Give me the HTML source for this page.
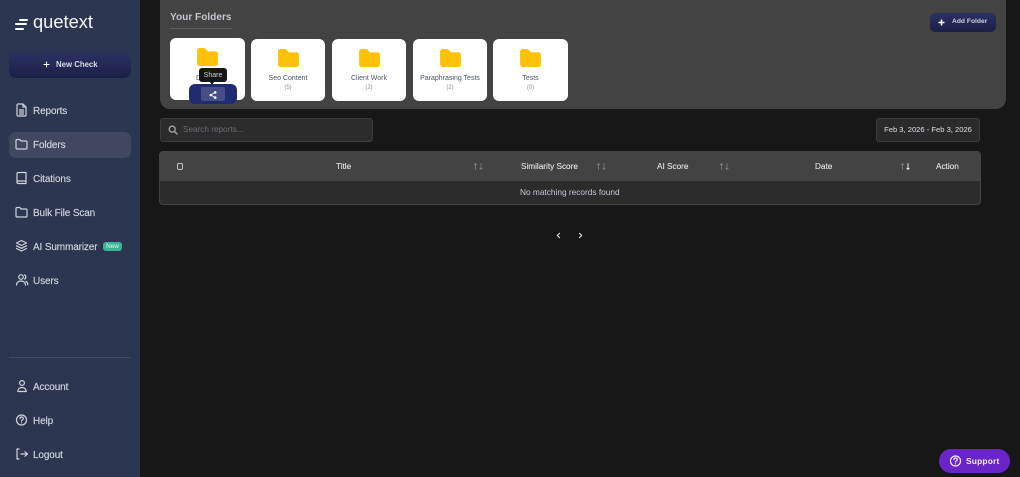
<!DOCTYPE html>
<html lang="en">
<head>
<meta charset="utf-8">
<title>Quetext Folders</title>
<style>
*{box-sizing:border-box;margin:0;padding:0}
html,body{width:1020px;height:477px;overflow:hidden;background:#171717;font-family:"Liberation Sans",sans-serif}
.a{position:absolute}
.t{position:absolute;white-space:nowrap;line-height:1}
#side{position:absolute;left:0;top:0;width:140px;height:477px;background:#2c3650}
.nav{position:absolute;left:33px;font-size:10px;letter-spacing:-.13px;color:#cfd3dc;white-space:nowrap;line-height:14px;-webkit-text-stroke:.15px #cfd3dc;margin-top:1px}
svg.ic{position:absolute;fill:none;stroke:#cfd3dc;stroke-width:1.2;stroke-linecap:round;stroke-linejoin:round;margin-top:-1px}
.card{position:absolute;top:39px;width:74px;height:62px;background:#fff;border-radius:6px}
.card svg{position:absolute;left:27px;top:10px}
.card .n{position:absolute;left:0;width:100%;top:35px;text-align:center;font-size:7px;color:#4d5568;line-height:9px;white-space:nowrap}
.card .c{position:absolute;left:0;width:100%;top:45px;text-align:center;font-size:6px;color:#8b909c;line-height:8px}
.th{position:absolute;top:161px;font-size:8.200px;color:#e4e4e6;line-height:11px;white-space:nowrap;-webkit-text-stroke:.1px #e4e4e6}
svg.sort{position:absolute;top:163px;fill:none;stroke-width:.9;stroke-linecap:round;stroke-linejoin:round}
</style>
</head>
<body>
<div id="side">
  <div class="a" style="left:19px;top:18.500px;width:9px;height:2px;background:#fff;border-radius:1px"></div>
  <div class="a" style="left:15px;top:23px;width:12px;height:2px;background:#fff;border-radius:1px"></div>
  <div class="a" style="left:15px;top:27.500px;width:9px;height:2px;background:#fff;border-radius:1px"></div>
  <div class="t" style="left:33px;top:13px;font-size:18.300px;color:#f4f5f7">quetext</div>

  <div class="a" style="left:9px;top:53px;width:122px;height:25px;border-radius:7px;background:linear-gradient(#2b3163,#1b2045)"></div>
  <svg class="a" style="left:43px;top:61px" width="7" height="7" viewBox="0 0 7 7" stroke="#fff" stroke-width="1.100"><path d="M3.500 .5v6M.5 3.500h6"/></svg>
  <div class="t" style="left:56px;top:61px;font-size:7.800px;font-weight:bold;color:#d9dbe4">New Check</div>

  <svg class="ic" style="left:15px;top:104px" width="13" height="14" viewBox="0 0 13 14"><path d="M3 1h5l3 3v8a1 1 0 0 1-1 1H3a1 1 0 0 1-1-1V2a1 1 0 0 1 1-1zM8 1v3h3M4.500 7h4M4.500 9h4M4.500 11h4"/></svg>
  <div class="nav" style="top:104px">Reports</div>

  <div class="a" style="left:9px;top:132px;width:122px;height:26px;border-radius:7px;background:#3f4860"></div>
  <svg class="ic" style="left:15px;top:138px" width="13" height="14" viewBox="0 0 13 14"><path d="M1 3.500a1 1 0 0 1 1-1h2.800l1.200 1.500h5a1 1 0 0 1 1 1v6a1 1 0 0 1-1 1H2a1 1 0 0 1-1-1z"/></svg>
  <div class="nav" style="top:138px">Folders</div>

  <svg class="ic" style="left:15px;top:172px" width="13" height="14" viewBox="0 0 13 14"><path d="M2 11.500V2.500a1 1 0 0 1 1-1h8v11H3.200A1.200 1.200 0 0 1 2 11.300a1.200 1.200 0 0 1 1.200-1.300H11"/></svg>
  <div class="nav" style="top:172px">Citations</div>

  <svg class="ic" style="left:15px;top:206px" width="13" height="14" viewBox="0 0 13 14"><path d="M1 3.500a1 1 0 0 1 1-1h2.800l1.200 1.500h5a1 1 0 0 1 1 1v6a1 1 0 0 1-1 1H2a1 1 0 0 1-1-1z"/></svg>
  <div class="nav" style="top:206px">Bulk File Scan</div>

  <svg class="ic" style="left:15px;top:240px" width="13" height="14" viewBox="0 0 13 14"><path d="M6.500 1.500l5 2.500-5 2.500-5-2.500zM1.500 6.800l5 2.500 5-2.500M1.500 9.500l5 2.500 5-2.500"/></svg>
  <div class="nav" style="top:240px">AI Summarizer</div>
  <div class="a" style="left:103px;top:242px;width:19px;height:9px;border-radius:3px;background:#39b296;color:#e6f6f1;font-size:6.400px;line-height:9px;text-align:center">New</div>

  <svg class="ic" style="left:15px;top:274px" width="14" height="14" viewBox="0 0 14 14"><circle cx="6" cy="4" r="2.300"/><path d="M1.500 12c0-2.500 2-4 4.500-4s4.500 1.500 4.500 4M9.500 1.900a2.300 2.300 0 0 1 0 4.200M11 8.300c1 .6 1.800 1.900 1.800 3.400"/></svg>
  <div class="nav" style="top:274px">Users</div>

  <div class="a" style="left:9px;top:357px;width:122px;height:1px;background:#414a62"></div>

  <svg class="ic" style="left:15px;top:380px" width="14" height="14" viewBox="0 0 14 14"><circle cx="7" cy="4" r="2.400"/><path d="M2.800 12.500c0-2.500 1.800-4 4.200-4s4.200 1.500 4.200 4z"/></svg>
  <div class="nav" style="top:380px">Account</div>

  <svg class="ic" style="left:15px;top:414px" width="14" height="14" viewBox="0 0 14 14"><circle cx="6.500" cy="7" r="5"/><path d="M5 5.600a1.600 1.600 0 1 1 2.300 1.400c-.6.300-.8.600-.8 1.100M6.500 9.800v.1"/></svg>
  <div class="nav" style="top:414px">Help</div>

  <svg class="ic" style="left:15px;top:448px" width="14" height="14" viewBox="0 0 14 14"><path d="M4 2H2v10h2M6 7h6.500M10 4.800L12.500 7 10 9.200"/></svg>
  <div class="nav" style="top:448px">Logout</div>
</div>

<!-- Folders panel -->
<div class="a" style="left:160px;top:-12px;width:846px;height:121px;background:#434343;border-radius:10px"></div>
<div class="t" style="left:170px;top:13px;font-size:10.100px;font-weight:bold;color:#c2c5cc">Your Folders</div>
<div class="a" style="left:170px;top:28px;width:62px;height:1px;background:#5c5c5c"></div>

<div class="a" style="left:930px;top:13px;width:66px;height:19px;border-radius:5px;background:linear-gradient(#2b3163,#1b2045)"></div>
<svg class="a" style="left:938px;top:19px" width="7" height="7" viewBox="0 0 7 7" stroke="#fff" stroke-width="1.500"><path d="M3.500 .5v6M.5 3.500h6"/></svg>
<div class="t" style="left:952px;top:19px;font-size:6.700px;font-weight:bold;color:#cdd0dc">Add Folder</div>

<div class="card" style="left:170px;top:38px;width:75px"><svg style="top:10px" width="21" height="18" viewBox="0 0 22 19"><path d="M2.500 0h4.500c1 0 1.600.4 2.200 1l2.300 2.500h8a2.500 2.500 0 0 1 2.500 2.500v10.500a2.500 2.500 0 0 1-2.500 2.500h-17a2.500 2.500 0 0 1-2.500-2.500v-14a2.500 2.500 0 0 1 2.500-2.500z" fill="#ffc107"/></svg><div class="n" style="top:36px;left:26px;width:auto">D</div></div>
<div class="card" style="left:251px"><svg width="21" height="18" viewBox="0 0 22 19"><path d="M2.500 0h4.500c1 0 1.600.4 2.200 1l2.300 2.500h8a2.500 2.500 0 0 1 2.500 2.500v10.500a2.500 2.500 0 0 1-2.500 2.500h-17a2.500 2.500 0 0 1-2.500-2.500v-14a2.500 2.500 0 0 1 2.500-2.500z" fill="#ffc107"/></svg><div class="n">Seo Content</div><div class="c">(5)</div></div>
<div class="card" style="left:332px"><svg width="21" height="18" viewBox="0 0 22 19"><path d="M2.500 0h4.500c1 0 1.600.4 2.200 1l2.300 2.500h8a2.500 2.500 0 0 1 2.500 2.500v10.500a2.500 2.500 0 0 1-2.500 2.500h-17a2.500 2.500 0 0 1-2.500-2.500v-14a2.500 2.500 0 0 1 2.500-2.500z" fill="#ffc107"/></svg><div class="n">Client Work</div><div class="c">(2)</div></div>
<div class="card" style="left:413px"><svg width="21" height="18" viewBox="0 0 22 19"><path d="M2.500 0h4.500c1 0 1.600.4 2.200 1l2.300 2.500h8a2.500 2.500 0 0 1 2.500 2.500v10.500a2.500 2.500 0 0 1-2.500 2.500h-17a2.500 2.500 0 0 1-2.500-2.500v-14a2.500 2.500 0 0 1 2.500-2.500z" fill="#ffc107"/></svg><div class="n">Paraphrasing Tests</div><div class="c">(2)</div></div>
<div class="card" style="left:493px;width:75px"><svg width="21" height="18" viewBox="0 0 22 19"><path d="M2.500 0h4.500c1 0 1.600.4 2.200 1l2.300 2.500h8a2.500 2.500 0 0 1 2.500 2.500v10.500a2.500 2.500 0 0 1-2.500 2.500h-17a2.500 2.500 0 0 1-2.500-2.500v-14a2.500 2.500 0 0 1 2.500-2.500z" fill="#ffc107"/></svg><div class="n">Tests</div><div class="c">(0)</div></div>

<!-- share overlay -->
<div class="a" style="left:189px;top:84px;width:48px;height:20px;border-radius:6px;background:#212c70"></div>
<div class="a" style="left:201px;top:87px;width:24px;height:14px;border-radius:2px;background:#454e86"></div>
<svg class="a" style="left:209px;top:90.500px" width="8" height="8" viewBox="0 0 8 8"><path d="M6 1.300L2 4l4 2.700" stroke="#fff" stroke-width=".8" fill="none"/><circle cx="6.200" cy="1.400" r="1.300" fill="#fff"/><circle cx="1.800" cy="4" r="1.300" fill="#fff"/><circle cx="6.200" cy="6.600" r="1.300" fill="#fff"/></svg>
<div class="a" style="left:199px;top:68px;width:28px;height:14px;border-radius:3px;background:#161616;color:#cfcfcf;font-size:7px;line-height:15px;text-align:center">Share</div>
<div class="a" style="left:210px;top:82px;width:0;height:0;border-left:2.500px solid transparent;border-right:2.500px solid transparent;border-top:3px solid #161616"></div>

<!-- search -->
<div class="a" style="left:160px;top:118px;width:213px;height:24px;background:#2c2c2c;border:1px solid #3c3c3c;border-radius:3px"></div>
<svg class="a" style="left:168px;top:125px" width="10" height="10" viewBox="0 0 10 10" fill="none" stroke="#a6a6a8" stroke-width="1.300" stroke-linecap="round"><circle cx="4.200" cy="4.200" r="3"/><path d="M6.500 6.500L9 9"/></svg>
<div class="t" style="left:183px;top:126px;font-size:8.200px;color:#6a6d75">Search reports...</div>

<!-- date -->
<div class="a" style="left:876px;top:118px;width:104px;height:24px;background:#2a2a2a;border:1px solid #3c3c3c;border-radius:3px;color:#c9ccd3;font-size:7.600px;line-height:22px;text-align:center;white-space:nowrap;-webkit-text-stroke:.1px #c9ccd3">Feb 3, 2026 - Feb 3, 2026</div>

<!-- table -->
<div class="a" style="left:159px;top:151px;width:822px;height:54px;background:#2c2c2c;border:1px solid #444;border-radius:4px;overflow:hidden">
  <div class="a" style="left:0;top:0;width:100%;height:29px;background:#434343"></div>
</div>
<div class="a" style="left:177px;top:163px;width:6px;height:7px;border:1px solid #c4c4c4;border-radius:2px"></div>
<div class="th" style="left:336px">Title</div>
<svg class="sort" style="left:474px" width="10" height="7" viewBox="0 0 10 7" stroke="#77797d"><path d="M1.500 6.500V.5M.3 1.800L1.500 .5l1.200 1.300M7 .5v6M5.800 5.200L7 6.500l1.200-1.300"/></svg>
<div class="th" style="left:521px">Similarity Score</div>
<svg class="sort" style="left:597px" width="10" height="7" viewBox="0 0 10 7" stroke="#77797d"><path d="M1.500 6.500V.5M.3 1.800L1.500 .5l1.200 1.300M7 .5v6M5.800 5.200L7 6.500l1.200-1.300"/></svg>
<div class="th" style="left:657px">AI Score</div>
<svg class="sort" style="left:720px" width="10" height="7" viewBox="0 0 10 7" stroke="#77797d"><path d="M1.500 6.500V.5M.3 1.800L1.500 .5l1.200 1.300M7 .5v6M5.800 5.200L7 6.500l1.200-1.300"/></svg>
<div class="th" style="left:815px">Date</div>
<svg class="sort" style="left:901px" width="10" height="7" viewBox="0 0 10 7" stroke="#77797d"><path d="M1.500 6.500V.5M.3 1.800L1.500 .5l1.200 1.300"/><path d="M7 .5v6M5.800 5.200L7 6.500l1.200-1.300" stroke="#eee"/></svg>
<div class="th" style="left:936px">Action</div>
<div class="t" style="left:520px;top:187.500px;font-size:8.300px;color:#c3c8d2">No matching records found</div>

<svg class="a" style="left:556px;top:232px" width="5" height="7" viewBox="0 0 5 7" fill="none" stroke="#e4e4e4" stroke-width="1.100"><path d="M3.800 1L1.300 3.500l2.500 2.500"/></svg>
<svg class="a" style="left:578px;top:232px" width="5" height="7" viewBox="0 0 5 7" fill="none" stroke="#e4e4e4" stroke-width="1.100"><path d="M1.200 1l2.500 2.500L1.200 6"/></svg>

<!-- support -->
<div class="a" style="left:939px;top:449px;width:71px;height:24px;border-radius:12px;background:#6a25c9"></div>
<svg class="a" style="left:949px;top:454px" width="13" height="14" viewBox="0 0 13 14" fill="none" stroke="#f2ecfb" stroke-width="1.200" stroke-linecap="round"><circle cx="6.500" cy="7" r="5"/><path d="M5 5.600a1.600 1.600 0 1 1 2.300 1.400c-.6.300-.8.600-.8 1.100M6.500 9.800v.1"/></svg>
<div class="t" style="left:966px;top:457px;font-size:8.400px;letter-spacing:.2px;font-weight:bold;color:#f2ecfb">Support</div>
</body>
</html>
